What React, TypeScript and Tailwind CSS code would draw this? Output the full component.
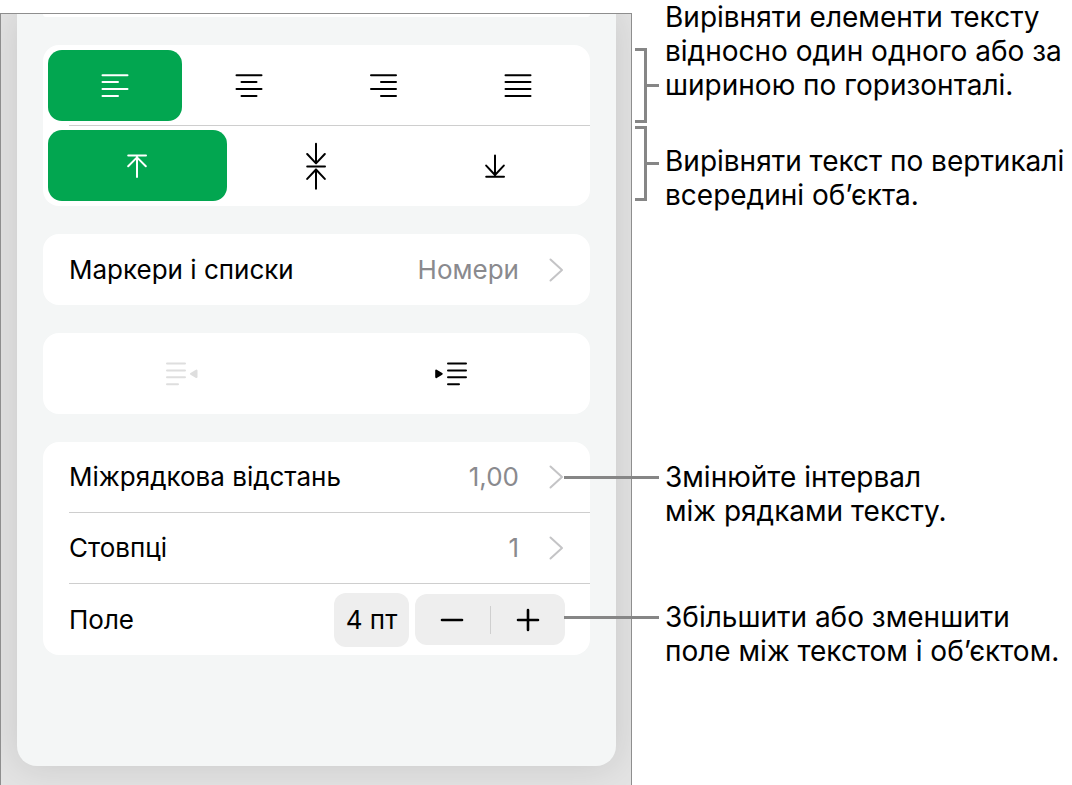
import type { ReactNode } from "react";
import { useState } from "react";
import clsx from "clsx";

interface IconProps {
  width: number;
  height: number;
  strokeWidth?: number;
  children: ReactNode;
}

function Icon({ width, height, strokeWidth = 2, children }: IconProps) {
  return (
    <svg
      width={width}
      height={height}
      viewBox={`0 0 ${width} ${height}`}
      fill="none"
      stroke="currentColor"
      strokeWidth={strokeWidth}
      strokeLinecap="round"
      strokeLinejoin="round"
      aria-hidden="true"
    >
      {children}
    </svg>
  );
}

const horizontal = [
  { label: "Ліворуч", path: "M1.5 1.3h25M1.5 8.1h15.5M1.5 15.1h25M1.5 22h15.5" },
  { label: "По центру", path: "M1.5 1.3h25M6.5 8.1h15M1.5 15.1h25M6.5 22h15" },
  { label: "Праворуч", path: "M1 1.3h25M11 8.1h15M1 15.1h25M11 22h15" },
  { label: "За шириною", path: "M1.5 1.3h25M1.5 8.1h25M1.5 15.1h25M1.5 22h25" },
];

const vertical = [
  {
    label: "Вгорі",
    height: 24,
    path: "M1.2 1.5h17.8M10 3v20M1.2 12.2L10 3.4l8.8 8.8",
  },
  {
    label: "Посередині",
    height: 48,
    path: "M1.2 24.4h17.8M10 1.8v19.5M1.2 12L10 21.4l8.8-9.4M10 46.7V27.5M1.2 36.9L10 27.5l8.8 9.4",
  },
  {
    label: "Внизу",
    height: 24,
    path: "M1.2 22.8h17.8M10 1.4v19.6M1.2 11.6l8.8 9.4 8.8-9.4",
  },
];

interface SegmentProps {
  label: string;
  selected: boolean;
  onClick: () => void;
  children: ReactNode;
}

function Segment({ label, selected, onClick, children }: SegmentProps) {
  return (
    <button
      type="button"
      aria-label={label}
      aria-pressed={selected}
      onClick={onClick}
      className={clsx(
        "flex h-[71px] flex-1 cursor-pointer items-center justify-center rounded-[14px]",
        selected ? "bg-[#02a650] text-white" : "text-black",
      )}
    >
      {children}
    </button>
  );
}

function Card({ children }: { children: ReactNode }) {
  return <section className="rounded-2xl bg-white">{children}</section>;
}

interface LinkRowProps {
  label: string;
  value: string;
  divided?: boolean;
}

function LinkRow({ label, value, divided }: LinkRowProps) {
  return (
    <div className="pl-[26px]">
      <button
        type="button"
        className={clsx(
          "flex h-[71px] w-full cursor-pointer items-center pr-[26px] text-left",
          divided && "border-b border-[#cecece]",
        )}
      >
        <span className="flex-1">{label}</span>
        <span className="mr-[29px] text-[#8a8a8e]">{value}</span>
        <span className="text-[#c4c4c6]">
          <Icon width={16} height={24}>
            <path d="M2.5 1.5L14 12 2.5 22.5" />
          </Icon>
        </span>
      </button>
    </div>
  );
}

function Bracket() {
  return (
    <div className="mr-1.5 flex h-[75px] w-[24px] shrink-0 items-center">
      <div className="h-full w-3 border-y-3 border-r-3 border-[#868686]" />
      <div className="h-[3px] flex-1 bg-[#868686]" />
    </div>
  );
}

function Leader() {
  return (
    <div className="absolute top-4 -left-[71px] h-[3px] w-[95px] bg-[#868686]" />
  );
}

export default function App() {
  const [align, setAlign] = useState("Ліворуч");
  const [valign, setValign] = useState("Вгорі");
  const [inset, setInset] = useState(4);

  return (
    <div className="flex min-h-screen bg-white font-['Inter',sans-serif] text-black">
      <main className="mt-[13px] min-w-0 flex-1 overflow-hidden border-x border-t border-[#8e8e8e] bg-[#e3e3e3] pr-[15px] pb-[19px] pl-4 text-[26px] leading-8">
        <div className="rounded-b-[20px] bg-[#f4f6f6] px-[26px] pb-[111px] shadow-[0_0_36px_rgba(0,0,0,0.12)]">
          <div className="mb-7 h-[3px] rounded-b-2xl bg-white" />

          <div className="flex flex-col gap-7">
            <Card>
              <div className="flex px-[5px] pt-[5px] pb-1">
                {horizontal.map((item) => (
                  <Segment
                    key={item.label}
                    label={item.label}
                    selected={align === item.label}
                    onClick={() => setAlign(item.label)}
                  >
                    <Icon width={28} height={24}>
                      <path d={item.path} />
                    </Icon>
                  </Segment>
                ))}
              </div>
              <div className="ml-[26px] h-px bg-[#cecece]" />
              <div className="flex px-[5px] pt-1 pb-[5px]">
                {vertical.map((item) => (
                  <Segment
                    key={item.label}
                    label={item.label}
                    selected={valign === item.label}
                    onClick={() => setValign(item.label)}
                  >
                    <Icon width={21} height={item.height}>
                      <path d={item.path} />
                    </Icon>
                  </Segment>
                ))}
              </div>
            </Card>

            <Card>
              <LinkRow label="Маркери і списки" value="Номери" />
            </Card>

            <Card>
              <div className="flex h-[81px] px-[5px]">
                <button
                  type="button"
                  disabled
                  aria-label="Зменшити відступ"
                  className="flex flex-1 items-center justify-center text-[#dedede]"
                >
                  <Icon width={32} height={24}>
                    <path d="M1 1.5h18M1 8.4h18M1 15.3h18M1 22.3h11" />
                    <path
                      d="M25 11.8l5.5-3.3v6.6z"
                      fill="currentColor"
                    />
                  </Icon>
                </button>
                <button
                  type="button"
                  aria-label="Збільшити відступ"
                  className="flex flex-1 cursor-pointer items-center justify-center"
                >
                  <Icon width={32} height={24}>
                    <path d="M13 1.5h18M13 8.4h18M13 15.3h18M13 22.3h11" />
                    <path d="M1.2 8.5l5.5 3.3-5.5 3.3z" fill="currentColor" />
                  </Icon>
                </button>
              </div>
            </Card>

            <Card>
              <LinkRow label="Міжрядкова відстань" value="1,00" divided />
              <LinkRow label="Стовпці" value="1" divided />
              <div className="flex h-[71px] items-center gap-1.5 pr-[25px] pl-[26px]">
                <label htmlFor="inset" className="flex-1">
                  Поле
                </label>
                <input
                  id="inset"
                  readOnly
                  value={`${inset} пт`}
                  className="h-[54px] w-[75px] rounded-xl bg-[#eeeeee] text-center"
                />
                <div className="flex h-[51px] w-[150px] items-center rounded-xl bg-[#eeeeee]">
                  <button
                    type="button"
                    aria-label="Зменшити"
                    onClick={() => setInset(Math.max(0, inset - 1))}
                    className="flex h-full flex-1 cursor-pointer items-center justify-center"
                  >
                    <Icon width={24} height={24} strokeWidth={2.6}>
                      <path d="M2 12h20" />
                    </Icon>
                  </button>
                  <div className="h-7 w-px bg-[#cfcfcf]" />
                  <button
                    type="button"
                    aria-label="Збільшити"
                    onClick={() => setInset(inset + 1)}
                    className="flex h-full flex-1 cursor-pointer items-center justify-center"
                  >
                    <Icon width={24} height={24} strokeWidth={2.6}>
                      <path d="M2 12h20M12 2v20" />
                    </Icon>
                  </button>
                </div>
              </div>
            </Card>
          </div>
        </div>
      </main>

      <aside className="w-[440px] shrink-0 pl-[3px] text-[28px] leading-[34px] whitespace-nowrap">
        <div className="flex h-[123px] items-end">
          <Bracket />
          <p className="h-full">
            Вирівняти елементи тексту
            <br />
            відносно один одного або за
            <br />
            шириною по горизонталі.
          </p>
        </div>
        <div className="mt-[3px] flex">
          <Bracket />
          <p className="pt-[18px]">
            Вирівняти текст по вертикалі
            <br />
            всередині об’єкта.
          </p>
        </div>
        <div className="relative mt-[248px] pl-[30px]">
          <Leader />
          <p>
            Змінюйте інтервал
            <br />
            між рядками тексту.
          </p>
        </div>
        <div className="relative mt-[72px] pl-[30px]">
          <Leader />
          <p>
            Збільшити або зменшити
            <br />
            поле між текстом і об’єктом.
          </p>
        </div>
      </aside>
    </div>
  );
}
